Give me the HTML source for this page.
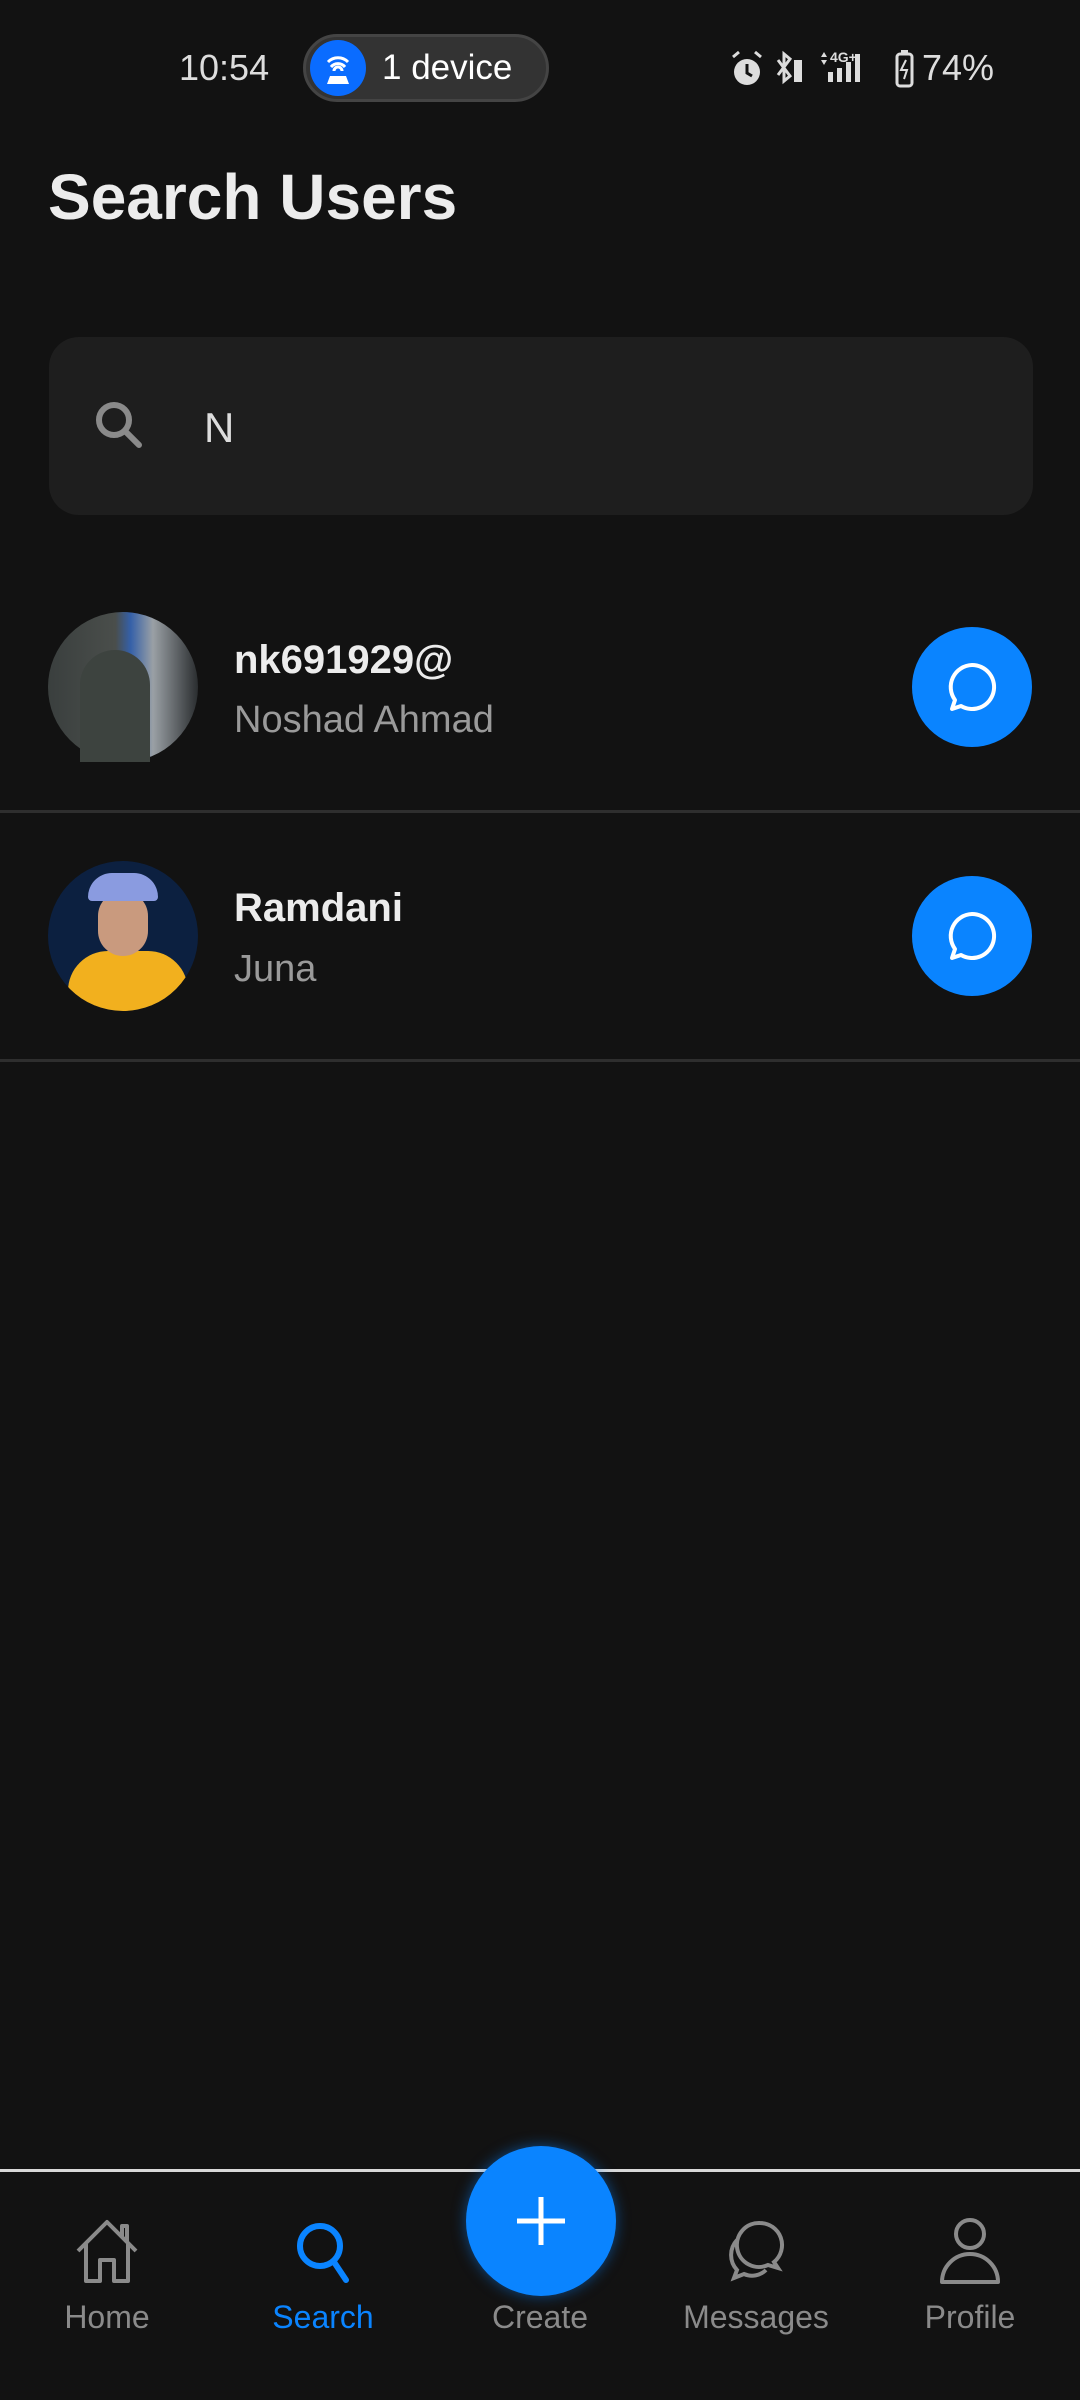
<!DOCTYPE html>
<html><head><meta charset="utf-8"><style>
*{margin:0;padding:0;box-sizing:border-box}
body{width:1080px;height:2400px;background:#121212;font-family:"Liberation Sans",sans-serif;position:relative;overflow:hidden;color:#e8e8e8}
.abs{position:absolute}
.name{font-weight:bold;font-size:40px;color:#ececec}
.sub{font-size:38px;color:#9a9a9a}
.div{position:absolute;left:0;width:1080px;height:3px;background:#2e2e2e}
.btn{position:absolute;left:912px;width:120px;height:120px;border-radius:50%;background:#0a84ff}
.lbl{position:absolute;top:2299px;font-size:32px;color:#8a8a8a;width:200px;text-align:center}
</style></head><body>
<div class="abs" style="left:179px;top:47px;font-size:36px;color:#ddd">10:54</div>
<div class="abs" style="left:303px;top:34px;width:246px;height:68px;border-radius:34px;background:#333;border:3px solid #444"></div>
<div class="abs" style="left:310px;top:40px;width:56px;height:56px;border-radius:50%;background:#0a6cff">
<svg width="56" height="56" viewBox="0 0 56 56"><path d="M18 22a14 14 0 0 1 20 0M21 27a9 9 0 0 1 14 0M24 31a4 4 0 0 1 8 0" stroke="#fff" stroke-width="3" fill="none"/><path d="M17 44l3-8h16l3 8z" fill="#fff"/></svg></div>
<div class="abs" style="left:382px;top:48px;font-size:35px;color:#fff">1 device</div>
<svg class="abs" style="left:728px;top:48px" width="190" height="42" viewBox="0 0 190 42">
<circle cx="19" cy="24" r="13" fill="#ddd"/><path d="M19 16v9l5 3" stroke="#121212" stroke-width="3" fill="none"/><path d="M5 9l6-5M33 9l-6-5" stroke="#ddd" stroke-width="3"/>
<path d="M50 12l12 16-6 5V6l6 5-12 16" stroke="#ddd" stroke-width="3" fill="none"/><rect x="66" y="12" width="8" height="22" fill="#ddd"/>
<path d="M96 4l3 5h-6zM96 17l3-5h-6z" fill="#ddd"/><text x="102" y="14" font-size="14" font-weight="bold" fill="#ddd" font-family="Liberation Sans">4G+</text>
<rect x="100" y="24" width="5" height="10" fill="#ddd"/><rect x="109" y="20" width="5" height="14" fill="#ddd"/><rect x="118" y="14" width="5" height="20" fill="#ddd"/><rect x="127" y="6" width="5" height="28" fill="#ddd"/>
<rect x="169" y="6" width="15" height="32" rx="3" stroke="#ddd" stroke-width="3" fill="none"/><rect x="173" y="2" width="7" height="4" fill="#ddd"/><path d="M178 12l-5 10h6l-3 9" stroke="#ddd" stroke-width="2" fill="none"/>
</svg>
<div class="abs" style="left:922px;top:47px;font-size:36px;color:#ddd">74%</div>

<div class="abs" style="left:48px;top:160px;font-size:64px;font-weight:bold;color:#ececec">Search Users</div>

<div class="abs" style="left:49px;top:337px;width:984px;height:178px;border-radius:30px;background:#1e1e1e"></div>
<svg class="abs" style="left:90px;top:396px" width="60" height="60" viewBox="0 0 60 60"><circle cx="24" cy="24" r="15" stroke="#8a8a8a" stroke-width="6" fill="none"/><path d="M35 35l14 14" stroke="#8a8a8a" stroke-width="6" stroke-linecap="round"/></svg>
<div class="abs" style="left:204px;top:404px;font-size:42px;color:#ddd">N</div>

<div class="abs" style="left:48px;top:612px;width:150px;height:150px;border-radius:50%;background:linear-gradient(90deg,#3a3f3e 0%,#4a4e4b 45%,#3560a8 55%,#9aa0a5 70%,#2a2d2f 100%)"></div>
<div class="abs" style="left:80px;top:650px;width:70px;height:112px;border-radius:35px 35px 0 0;background:#3d433f"></div>
<div class="abs name" style="left:234px;top:638px">nk691929@</div>
<div class="abs sub" style="left:234px;top:699px">Noshad Ahmad</div>
<div class="btn" style="top:627px"></div>
<svg class="abs" style="left:940px;top:655px" width="64" height="64" viewBox="0 0 64 64"><path d="M32 10a22 22 0 1 1-11 41l-9 3 3-9A22 22 0 0 1 32 10z" stroke="#fff" stroke-width="4" fill="none" stroke-linejoin="round"/></svg>
<div class="div" style="top:810px"></div>

<div class="abs" style="left:48px;top:861px;width:150px;height:150px;border-radius:50%;overflow:hidden;background:#0c2040">
<div class="abs" style="left:20px;top:90px;width:120px;height:70px;background:#f2b01e;border-radius:40px 40px 0 0"></div>
<div class="abs" style="left:50px;top:30px;width:50px;height:65px;background:#c99a7e;border-radius:25px"></div>
<div class="abs" style="left:40px;top:12px;width:70px;height:28px;background:#8a9be0;border-radius:30px 30px 5px 5px"></div>
</div>
<div class="abs name" style="left:234px;top:886px">Ramdani</div>
<div class="abs sub" style="left:234px;top:948px">Juna</div>
<div class="btn" style="top:876px"></div>
<svg class="abs" style="left:940px;top:904px" width="64" height="64" viewBox="0 0 64 64"><path d="M32 10a22 22 0 1 1-11 41l-9 3 3-9A22 22 0 0 1 32 10z" stroke="#fff" stroke-width="4" fill="none" stroke-linejoin="round"/></svg>
<div class="div" style="top:1059px"></div>

<div class="abs" style="left:0;top:2169px;width:1080px;height:3px;background:#d8d8d8"></div>
<div class="abs" style="left:466px;top:2146px;width:150px;height:150px;border-radius:50%;background:#0a84ff;box-shadow:0 0 14px rgba(10,132,255,.5)"></div>
<svg class="abs" style="left:511px;top:2191px" width="60" height="60" viewBox="0 0 60 60"><path d="M30 6v48M6 30h48" stroke="#fff" stroke-width="5"/></svg>

<svg class="abs" style="left:72px;top:2218px" width="70" height="66" viewBox="0 0 70 66"><path d="M6 33L35 4l29 29M14 26v37h14V42h14v21h14V26M50 18V8h5v15" stroke="#8a8a8a" stroke-width="4" fill="none" stroke-linejoin="round"/></svg>
<svg class="abs" style="left:290px;top:2220px" width="70" height="66" viewBox="0 0 70 66"><circle cx="30" cy="26" r="20" stroke="#0a84ff" stroke-width="6" fill="none"/><path d="M44 42l12 18" stroke="#0a84ff" stroke-width="6" stroke-linecap="round"/></svg>
<svg class="abs" style="left:722px;top:2218px" width="70" height="66" viewBox="0 0 70 66"><path d="M38 5a22 22 0 0 1 14 39l4 6-10-3a22 22 0 1 1-8-42z" stroke="#8a8a8a" stroke-width="4" fill="none"/><path d="M15 22a22 22 0 0 0 0 30l-3 8 10-4a20 20 0 0 0 22-4" stroke="#8a8a8a" stroke-width="4" fill="none"/></svg>
<svg class="abs" style="left:937px;top:2216px" width="66" height="70" viewBox="0 0 66 70"><circle cx="33" cy="18" r="14" stroke="#8a8a8a" stroke-width="4" fill="none"/><path d="M5 66a28 28 0 0 1 56 0z" stroke="#8a8a8a" stroke-width="4" fill="none" stroke-linejoin="round"/></svg>

<div class="lbl" style="left:7px">Home</div>
<div class="lbl" style="left:223px;color:#0a84ff">Search</div>
<div class="lbl" style="left:440px">Create</div>
<div class="lbl" style="left:656px">Messages</div>
<div class="lbl" style="left:870px">Profile</div>
</body></html>
